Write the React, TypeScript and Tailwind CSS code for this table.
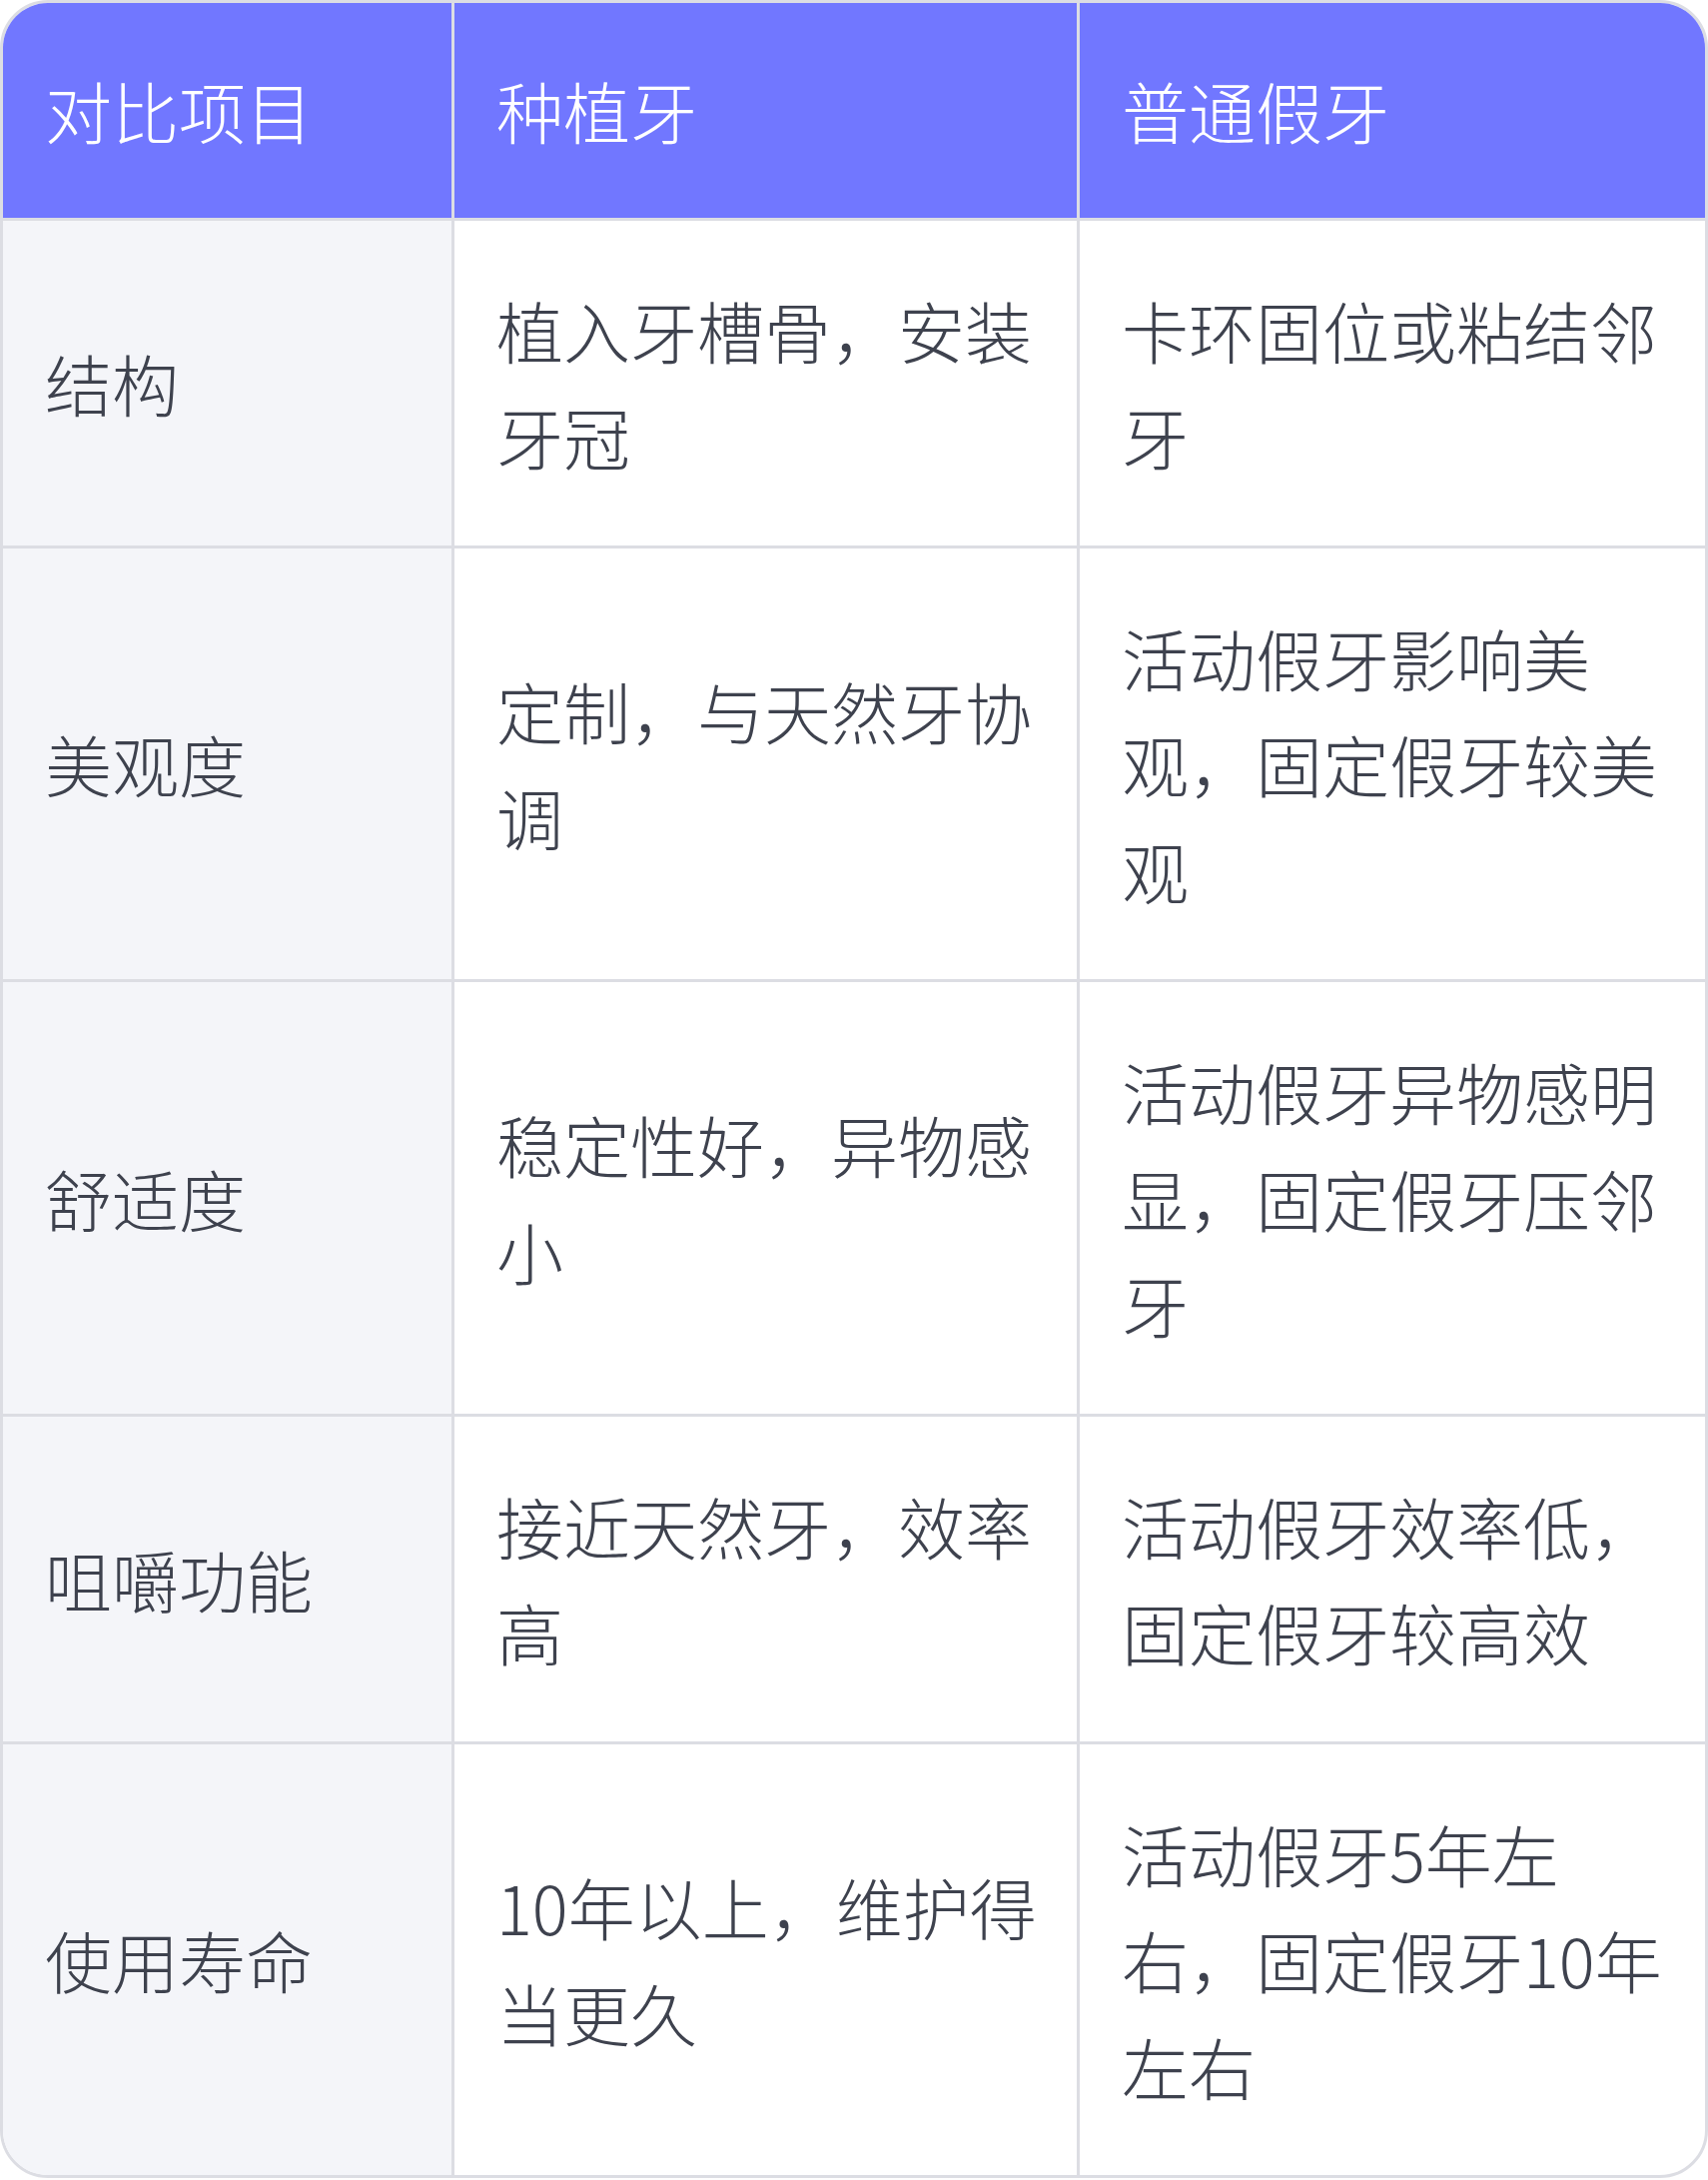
import React from "react";

type Row = {
  label: string;
  implant: string;
  denture: string;
};

const rows: Row[] = [
  { label: "结构", implant: "植入牙槽骨，安装牙冠", denture: "卡环固位或粘结邻牙" },
  { label: "美观度", implant: "定制，与天然牙协调", denture: "活动假牙影响美观，固定假牙较美观" },
  { label: "舒适度", implant: "稳定性好，异物感小", denture: "活动假牙异物感明显，固定假牙压邻牙" },
  { label: "咀嚼功能", implant: "接近天然牙，效率高", denture: "活动假牙效率低，固定假牙较高效" },
  { label: "使用寿命", implant: "10年以上，维护得当更久", denture: "活动假牙5年左右，固定假牙10年左右" },
];

const headers = ["对比项目", "种植牙", "普通假牙"];

const App = () => {
  return (
    <div
      className="w-[1710px] bg-white"
      style={{ fontFamily: '"Noto Sans CJK SC", "Noto Sans", sans-serif' }}
    >
      <div className="overflow-hidden rounded-[48px] border-[3px] border-[#dcdde3]">
        <div className="grid grid-cols-[452px_626px_626px] text-[67px] font-light leading-[106.5px] text-[#3e424e]">
          {headers.map((h, i) => (
            <div
              key={h}
              className={`flex items-center bg-[#7177ff] px-[42px] py-[54px] text-white border-b-[3px] border-[#dcdde3] ${
                i < 2 ? "border-r-[3px]" : ""
              }`}
            >
              {h}
            </div>
          ))}

          {rows.map((row, r) => {
            const last = r === rows.length - 1;
            return (
              <React.Fragment key={row.label}>
                <div
                  className={`flex items-center bg-[#f4f5f9] px-[42px] py-[56px] border-r-[3px] border-[#dcdde3] ${
                    last ? "" : "border-b-[3px]"
                  }`}
                >
                  {row.label}
                </div>
                {/* a bit less right padding so "10年…" lines wrap like the reference */}
                <div
                  className={`flex items-center pl-[42px] pr-[36px] py-[56px] border-r-[3px] border-[#dcdde3] ${
                    last ? "" : "border-b-[3px]"
                  }`}
                >
                  <p>{row.implant}</p>
                </div>
                <div
                  className={`flex items-center pl-[42px] pr-[36px] py-[56px] border-[#dcdde3] ${
                    last ? "" : "border-b-[3px]"
                  }`}
                >
                  <p>{row.denture}</p>
                </div>
              </React.Fragment>
            );
          })}
        </div>
      </div>
    </div>
  );
};

export default App;
